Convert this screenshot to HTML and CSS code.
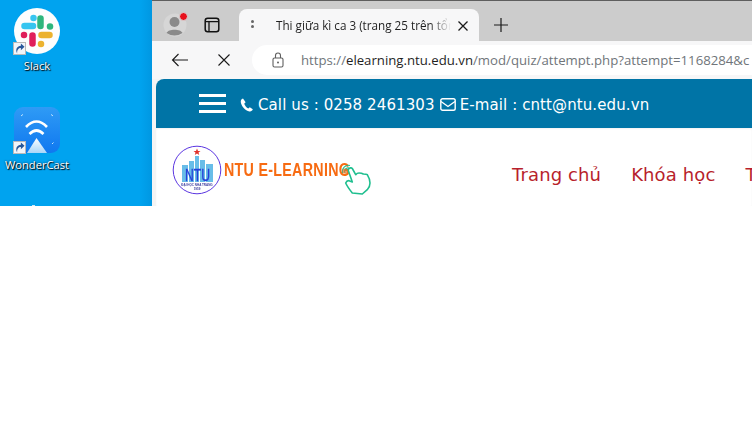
FILE: index.html
```html
<!DOCTYPE html>
<html lang="vi">
<head>
<meta charset="utf-8">
<title>Thi giữa kì ca 3</title>
<link rel="stylesheet" href="styles.css">
</head>
<body>
<main class="top">
  <aside class="desktop">
    <div class="shortcut slack">
      <div class="icon-wrap">
        <svg class="slack-icon" width="46" height="46" viewBox="0 0 46 46">
          <circle cx="23" cy="23" r="23" fill="#fdfdfd"/>
          <g fill="none" stroke-width="6.500" stroke-linecap="round">
            <path d="M10.500 18H19" stroke="#36c5f0"/>
            <path d="M19.500 10V10.100" stroke="#36c5f0"/>
            <path d="M26.500 10.500V18" stroke="#2eb67d"/>
            <path d="M36 18.500V18.600" stroke="#2eb67d"/>
            <path d="M18.500 27.500V35.500" stroke="#e01e5a"/>
            <path d="M10 27V27.100" stroke="#e01e5a"/>
            <path d="M27.500 27H35.500" stroke="#ecb22e"/>
            <path d="M27 36V36.100" stroke="#ecb22e"/>
          </g>
        </svg>
        <span class="badge"><svg width="11" height="11" viewBox="0 0 12 12"><path d="M3.500 11.500C3 7.500 5 5.500 7.500 5.500V8L11.500 4.200 7.500 .5V3C3.500 3 1 7 3.500 11.500Z" fill="#27579a"/></svg></span>
      </div>
      <span class="label">Slack</span>
    </div>
    <div class="shortcut wonder">
      <div class="icon-wrap">
        <svg width="46" height="46" viewBox="0 0 46 46">
          <defs>
            <linearGradient id="wg" x1="0" y1="0" x2="0" y2="1"><stop offset="0" stop-color="#2f9bf5"/><stop offset="1" stop-color="#0f78f0"/></linearGradient>
            <linearGradient id="tg" x1="0" y1="0" x2="0" y2="1"><stop offset="0" stop-color="#ffffff"/><stop offset="1" stop-color="#a9d6f8"/></linearGradient>
          </defs>
          <rect width="46" height="46" rx="9" fill="url(#wg)"/>
          <path d="M12 20Q22.500 9 33 20" fill="none" stroke="#fff" stroke-width="2.600"/>
          <path d="M15.500 27Q22.500 20 29.500 27" fill="none" stroke="#fff" stroke-width="2.600"/>
          <path d="M22.500 31L13 46H33Z" fill="url(#tg)"/>
          <path d="M7 9Q8 8 9 7.500M37 7.500Q38 8 39 9M38 37L39.500 35.500" stroke="#bfe2fb" fill="none"/>
        </svg>
        <span class="badge"><svg width="11" height="11" viewBox="0 0 12 12"><path d="M3.500 11.500C3 7.500 5 5.500 7.500 5.500V8L11.500 4.200 7.500 .5V3C3.500 3 1 7 3.500 11.500Z" fill="#27579a"/></svg></span>
      </div>
      <span class="label">WonderCast</span>
    </div>
    <span class="next-icon"></span>
  </aside>

  <section class="browser">
    <div class="tabstrip">
      <div class="avatar">
        <svg width="24" height="24" viewBox="0 0 24 24">
          <circle cx="12" cy="12" r="11.500" fill="#d6d6d6"/>
          <circle cx="11.500" cy="9" r="5" fill="#8a8a8a"/>
          <path d="M3.500 20C5 15.500 18 15.500 19.500 20Q11.500 25 3.500 20Z" fill="#8a8a8a"/>
        </svg>
        <span class="dot"></span>
      </div>
      <svg class="tab-panel" width="16" height="16" viewBox="0 0 16 16"><rect x="1.200" y="1.200" width="13.600" height="13.600" rx="2.500" fill="none" stroke="#111" stroke-width="1.500"/><path d="M1.500 4.700H14.500M5 4.700V14.500" stroke="#111" stroke-width="1.300" fill="none"/></svg>
      <div class="tab">
        <span class="tab-favicon"><i></i><i></i></span>
        <span class="tab-title">Thi giữa kì ca 3 (trang 25 trên tổn</span>
        <svg class="tab-close" width="12" height="12" viewBox="0 0 12 12"><path d="M1.500 1.500L10.500 10.500M10.500 1.500L1.500 10.500" stroke="#1a1a1a" stroke-width="1.300"/></svg>
      </div>
      <svg class="new-tab" width="16" height="16" viewBox="0 0 16 16"><path d="M8 1V15M1 8H15" stroke="#1a1a1a" stroke-width="1.200"/></svg>
    </div>
    <div class="toolbar">
      <svg class="back" width="18" height="14" viewBox="0 0 18 14"><path d="M17 7H1.500M7.500 1L1.500 7L7.500 13" fill="none" stroke="#1a1a1a" stroke-width="1.100"/></svg>
      <svg class="stop" width="14" height="14" viewBox="0 0 14 14"><path d="M1.500 1.500L12.500 12.500M12.500 1.500L1.500 12.500" stroke="#1a1a1a" stroke-width="1.100"/></svg>
      <div class="omnibox">
        <svg class="lock" width="14" height="16" viewBox="0 0 14 16"><rect x="2" y="6" width="10" height="9" rx="1.500" fill="none" stroke="#5f5f5f" stroke-width="1.100"/><path d="M4.500 6V3.500A2.500 2.500 0 0 1 9.500 3.500V6" fill="none" stroke="#5f5f5f" stroke-width="1.100"/><circle cx="7" cy="10.500" r="1" fill="#5f5f5f"/></svg>
        <span class="url"><span class="url-dim">https://</span><span class="url-host">elearning.ntu.edu.vn</span><span class="url-dim">/mod/quiz/attempt.php?attempt=1168284&amp;c</span></span>
      </div>
    </div>
    <div class="page">
      <div class="contact-bar">
        <div class="hamburger"><i></i><i></i><i></i></div>
        <svg class="phone" width="13" height="14" viewBox="0 0 13 14"><path d="M3 .5C1.500 1 .5 2.300.8 4.300 1.500 8.500 5 12.500 9.500 13.500 11 13.800 12.300 12.800 12.800 11.300L9.800 9.200 8.300 10.500C6.500 9.500 4.800 7.500 4.200 5.700L5.600 4.300Z" fill="#fff"/></svg>
        <span class="contact-text">Call us : 0258 2461303</span>
        <svg class="mail" width="16" height="13" viewBox="0 0 16 13"><rect x=".8" y=".8" width="14.400" height="11.400" rx="1.800" fill="none" stroke="#fff" stroke-width="1.400"/><path d="M1 3.500L8 8.500L15 3.500" fill="none" stroke="#fff" stroke-width="1.400"/></svg>
        <span class="contact-text">E-mail : cntt@ntu.edu.vn</span>
      </div>
      <div class="site-nav">
        <div class="logo">
          <svg class="logo-mark" width="50" height="50" viewBox="0 0 50 50">
            <circle cx="25" cy="25" r="23.800" fill="#fff" stroke="#5a35e0" stroke-width="1"/>
            <path d="M25 3.500L26 6H28.500L26.500 7.500L27.200 10L25 8.500L22.800 10L23.500 7.500L21.500 6H24Z" fill="#e0322c"/>
            <g fill="#68bde8">
              <rect x="10" y="20" width="6" height="17"/>
              <rect x="17" y="16" width="5" height="21"/>
              <rect x="23" y="11" width="4" height="26"/>
              <rect x="28" y="15" width="5" height="22"/>
              <rect x="34" y="19" width="7" height="18"/>
            </g>
            <text class="logo-ntu" x="13" y="36" textLength="25" lengthAdjust="spacingAndGlyphs">NTU</text>
            <text class="logo-small" x="25" y="40.500" text-anchor="middle">ĐẠI HỌC NHA TRANG</text>
            <text class="logo-small" x="25" y="45" text-anchor="middle">1959</text>
          </svg>
          <span class="logo-text">NTU E-LEARNING</span>
          <svg class="logo-hand" width="32" height="34" viewBox="0 0 32 34">
            <path d="M6 3.700C7.500 1.500 9.500 1.500 10.300 2.500L13.700 8.700C15 7 16 7 17 7C18.500 7 20 7.200 21.300 8C23 8 24.500 8 25.300 8.700C27 11.500 28 14 28 17C28 19.500 27 22 25.300 23.700L20.300 28L10.300 27C7.500 23.500 5 20 3.700 17C4.500 15 5.500 14.500 7 14.700L10.300 16Z" fill="#fff" stroke="#1fbf8f" stroke-width="1.600" stroke-linejoin="round"/>
            <path d="M.7 7A6 6 0 0 1 8 -.5M3 7A3.500 3.500 0 0 1 7 2" fill="none" stroke="#1fbf8f" stroke-width="1.100"/>
            <circle cx="3" cy="5" r="2.600" fill="#e8722a" opacity=".7"/>
          </svg>
        </div>
        <nav class="menu">
          <a>Trang chủ</a>
          <a>Khóa học</a>
          <a>T</a>
        </nav>
      </div>
    </div>
  </section>
</main>
</body>
</html>
```

FILE: styles.css
```css
* { box-sizing: border-box; }
html, body { margin: 0; height: 100%; background: #fff; overflow: hidden; }
.top { display: flex; height: 206px; width: 752px; }

.desktop {
  width: 152px; flex: none; position: relative;
  background: linear-gradient(90deg, #00a3ef 0, #00a3ef 92%, #0097e2 100%);
  display: flex; flex-direction: column; padding: 8px 0 0 14px;
}
.shortcut { width: 46px; display: flex; flex-direction: column; align-items: center; }
.icon-wrap { position: relative; width: 46px; height: 46px; }
.icon-wrap svg { display: block; }
.slack { margin-bottom: 33px; }
.badge {
  position: absolute; left: -1px; bottom: -1px; width: 13px; height: 13px;
  background: #f2f5f9; border: 1px solid #b9b9b9;
}
.label {
  font: 11.200px/16px "Open Sans", sans-serif; color: #fff; white-space: nowrap; margin-top: 4px;
  text-shadow: 1px 1px 1px #000, 0 0 2px #00254a;
}
.next-icon {
  position: absolute; left: 32px; bottom: 0; width: 3px; height: 1px; background: #cfeaf9;
}

.browser { flex: 1; min-width: 0; overflow: hidden; background: #f7f7f8; border-top: 1px solid #5e5e5e; }

.tabstrip { height: 40px; background: #cccccc; display: flex; align-items: flex-end; position: relative; }
.avatar { position: absolute; left: 11px; top: 12px; width: 24px; height: 24px; }
.avatar svg { display: block; }
.dot {
  position: absolute; right: -1px; top: -1px; width: 7px; height: 7px;
  border-radius: 50%; background: #e8101c; border: 1px solid #d8d8d8; box-sizing: content-box;
}
.tab-panel { position: absolute; left: 52px; top: 16px; }
.tab {
  margin-left: 87px; width: 240px; height: 32px; background: #f7f7f8;
  border-radius: 8px 8px 0 0; display: flex; align-items: center; position: relative;
}
.tab-favicon { position: absolute; left: 12px; top: 11px; display: flex; flex-direction: column; gap: 2px; }
.tab-favicon i { width: 3px; height: 3px; border-radius: 50%; background: #666; display: block; }
.tab-title {
  margin-left: 37px; width: 175px; overflow: hidden; white-space: nowrap;
  font: 11.700px/16px "Open Sans", sans-serif; color: #1f1f1f;
  -webkit-mask-image: linear-gradient(90deg, #000 88%, transparent 100%);
  mask-image: linear-gradient(90deg, #000 88%, transparent 100%);
}
.tab-close { position: absolute; right: 10px; top: 11px; }
.new-tab { position: absolute; left: 341px; top: 16px; }

.toolbar { height: 38px; display: flex; align-items: center; background: #f7f7f8; padding-left: 19px; }
.stop { margin-left: 28px; }
.omnibox {
  margin-left: 21px; flex: 1; height: 30px; background: #fff; border-radius: 15px 0 0 15px;
  display: flex; align-items: center; padding-left: 19px; overflow: hidden;
}
.lock { flex: none; }
.url { margin-left: 16px; white-space: nowrap; font: 13.200px/18px "Open Sans", sans-serif; }
.url-dim { color: #70757a; }
.url-host { color: #1f1f1f; }

.page { height: 127px; padding: 0 0 0 4px; background: #f4f4f4; }
.contact-bar {
  height: 49px; background: #0074a6; border-radius: 8px 0 0 0; display: flex; align-items: center;
  padding-left: 43px; color: #fff; white-space: nowrap;
}
.hamburger { width: 27px; display: flex; flex-direction: column; gap: 5px; margin-right: 14px; }
.hamburger i { display: block; height: 3px; background: #fff; }
.phone { flex: none; margin: 2px 5px 0 0; }
.mail { flex: none; margin: 2px 4px 0 5px; }
.contact-text { font: 15px/20px "DejaVu Sans", sans-serif; letter-spacing: .1px; padding-top: 2px; }

.site-nav {
  height: 78px; background: #fff; display: flex; align-items: flex-start; white-space: nowrap;
  box-shadow: 0 1px 2px rgba(0,0,0,.06) inset;
}
.logo { display: flex; align-items: flex-start; width: 356px; padding: 17px 0 0 16px; flex: none; position: relative; }
.logo-mark { flex: none; filter: blur(.4px); }
.logo-ntu { font: 400 16px "Liberation Sans", sans-serif; fill: #2740d8; stroke: #2740d8; stroke-width: .3px; }
.logo-small { font: 700 3px "Liberation Sans", sans-serif; fill: #4040a0; }
.logo-text {
  font: 700 19px/20px "Liberation Sans", sans-serif; color: #f76b12; margin: 15px 0 0 2px; letter-spacing: .4px;
  transform: scaleX(.75); transform-origin: left center; filter: blur(.3px);
}
.logo-hand { position: absolute; left: 186px; top: 38px; overflow: visible; }
.menu { display: flex; gap: 30px; padding-top: 35px; }
.menu a { font: 18px/24px "DejaVu Sans", sans-serif; color: #b81f2c; letter-spacing: .12px; }
```
